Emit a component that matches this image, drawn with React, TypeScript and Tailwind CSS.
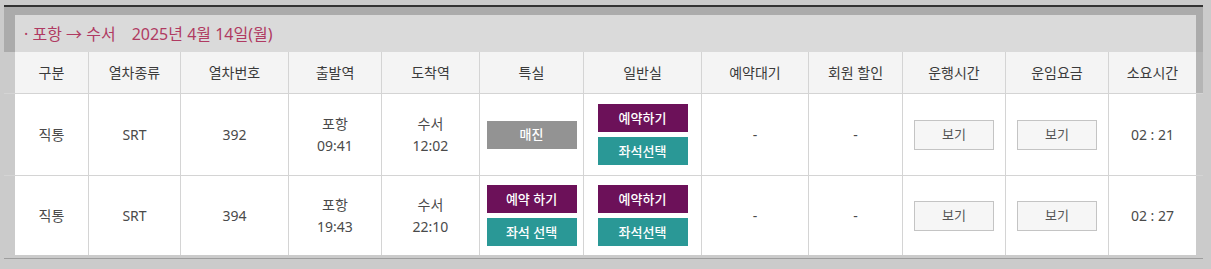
import React from 'react';

const font = { fontFamily: '"Noto Sans", "Noto Sans CJK KR", sans-serif' };

const gridCols =
  'grid grid-cols-[11px_73px_92px_108px_93px_98px_104px_118px_107px_94px_103px_103px_88px_7px]';

const headers = ['구분', '열차종류', '열차번호', '출발역', '도착역', '특실', '일반실', '예약대기', '회원 할인', '운행시간', '운임요금', '소요시간'];

interface Train {
  kind: string;
  type: string;
  no: string;
  dep: string;
  arr: string;
  soldOut: boolean;
  dur: string;
}

const trains: Train[] = [
  { kind: '직통', type: 'SRT', no: '392', dep: '09:41', arr: '12:02', soldOut: true, dur: '02 : 21' },
  { kind: '직통', type: 'SRT', no: '394', dep: '19:43', arr: '22:10', soldOut: false, dur: '02 : 27' },
];

const Cell: React.FC<{ children?: React.ReactNode; first?: boolean }> = ({ children, first }) => (
  <div
    className={`flex flex-col items-center justify-center bg-white text-[14px] text-[#4a4a4a] ${
      first ? '' : 'border-l border-[#d4d4d4]'
    }`}
  >
    {children}
  </div>
);

const ColorBtn: React.FC<{ label: string; color: string }> = ({ label, color }) => (
  <button className={`w-[90px] h-[28px] text-[13px] font-medium text-white leading-none ${color}`}>{label}</button>
);

const ViewBtn = () => (
  <button className="w-[80px] h-[30px] border border-[#c4c4c4] bg-[#f6f6f6] text-[13px] text-[#555] leading-none">
    보기
  </button>
);

export default function App() {
  return (
    <div className="w-[1211px] h-[269px] bg-[#cbcbcb] pt-[5px] pl-[4px]" style={font}>
      <div className="w-[1199px] border-t-2 border-[#333]">
        {/* caption band */}
        <div className="bg-[#ababab] pt-[8px] pl-[11px] pr-[7px]">
          <div className="h-[37px] bg-[#dadada] flex items-center pl-[9px] text-[16px] text-[#b03a62]">
            <span>· 포항 → 수서</span>
            <span className="ml-[16px]">2025년 4월 14일(월)</span>
          </div>
        </div>

        {/* header row */}
        <div className={`${gridCols} h-[42px] border-b border-[#d4d4d4]`}>
          <div />
          {headers.map((h, i) => (
            <div
              key={h}
              className={`flex items-center justify-center bg-[#f4f4f4] text-[14px] text-[#3a3a3a] ${
                i === 0 ? '' : 'border-l border-[#d4d4d4]'
              }`}
            >
              {h}
            </div>
          ))}
          <div className="bg-[#b5b5b5]" />
        </div>

        {/* train rows */}
        {trains.map((t, idx) => (
          <div
            key={t.no}
            className={`${gridCols} ${idx === 0 ? 'h-[82px] border-b border-[#d4d4d4]' : 'h-[79px]'}`}
          >
            <div />
            <Cell first>{t.kind}</Cell>
            <Cell>{t.type}</Cell>
            <Cell>{t.no}</Cell>
            <Cell>
              <span className="leading-[22px]">포항</span>
              <span className="leading-[22px]">{t.dep}</span>
            </Cell>
            <Cell>
              <span className="leading-[22px]">수서</span>
              <span className="leading-[22px]">{t.arr}</span>
            </Cell>
            <Cell>
              {t.soldOut ? (
                <ColorBtn label="매진" color="bg-[#939393]" />
              ) : (
                <div className="flex flex-col gap-[5px]">
                  <ColorBtn label="예약 하기" color="bg-[#6c1159]" />
                  <ColorBtn label="좌석 선택" color="bg-[#2a9896]" />
                </div>
              )}
            </Cell>
            <Cell>
              <div className="flex flex-col gap-[5px]">
                <ColorBtn label="예약하기" color="bg-[#6c1159]" />
                <ColorBtn label="좌석선택" color="bg-[#2a9896]" />
              </div>
            </Cell>
            <Cell>-</Cell>
            <Cell>-</Cell>
            <Cell>
              <ViewBtn />
            </Cell>
            <Cell>
              <ViewBtn />
            </Cell>
            <Cell>{t.dur}</Cell>
            <div />
          </div>
        ))}
        <div className="mt-[3px] h-px bg-[#9e9e9e]" />
      </div>
    </div>
  );
}
